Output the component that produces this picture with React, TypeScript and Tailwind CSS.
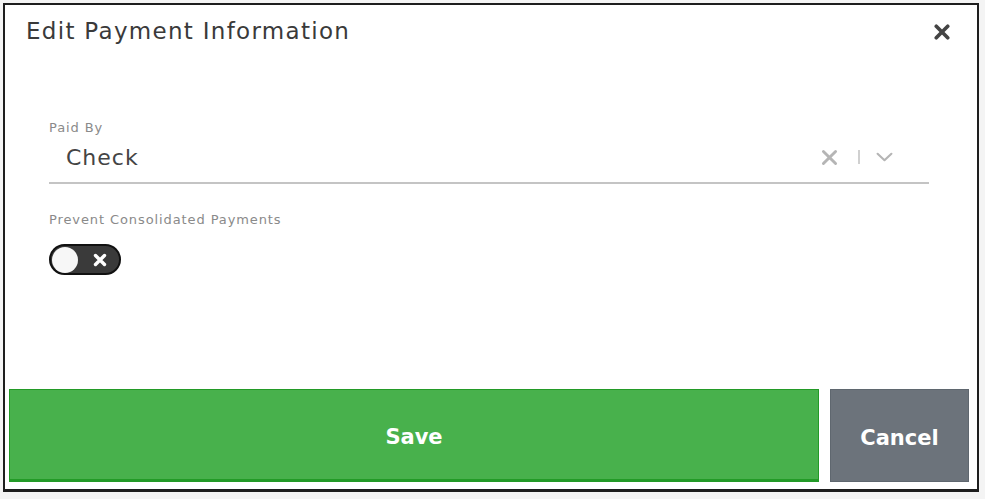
const font = { fontFamily: '"DejaVu Sans", Verdana, sans-serif' };

function Cross({ size, stroke, color }: { size: number; stroke: number; color: string }) {
  return (
    <svg viewBox="0 0 14 14" width={size} height={size}>
      <path d="M2 2 L12 12 M12 2 L2 12" stroke={color} strokeWidth={stroke} strokeLinecap="round" />
    </svg>
  );
}

function Toggle() {
  return (
    <div className="flex h-[31px] w-[72px] items-center rounded-full border-2 border-[#111] bg-[#3a3a3a] px-[1px]">
      <span className="h-[26px] w-[26px] rounded-full bg-[#f7f7f7]" />
      <span className="ml-[13px] flex h-[18px] w-[18px] items-center justify-center">
        <svg viewBox="0 0 16 16" className="h-[16px] w-[16px]">
          <path d="M3.5 3.5 L12.5 12.5 M12.5 3.5 L3.5 12.5" stroke="#fff" strokeWidth="3.4" strokeLinecap="round" />
        </svg>
      </span>
    </div>
  );
}

export default function App() {
  return (
    <div className="h-[499px] w-[985px] bg-[#f4f4f4] p-[3px]" style={font}>
      <div className="flex h-[489px] w-[976px] flex-col border-2 border-b-[3px] border-[#1e1e1e] bg-white">
        <div className="flex items-start justify-between pl-[21px] pr-[27px] pt-[11px]">
          <h1 className="text-[23px] leading-[30px] tracking-[1.3px] text-[#3a3a3a]">Edit Payment Information</h1>
          <button className="mt-[8px]" aria-label="Close">
            <Cross size={16} stroke={3.2} color="#444" />
          </button>
        </div>

        <div className="flex flex-1 flex-col pl-[44px] pr-[48px] pt-[74px]">
          <label className="text-[13px] leading-[16px] tracking-[0.9px] text-[#8a8a8a]">Paid By</label>
          <div className="flex h-[48px] items-center border-b-2 border-[#c4c4c4] pb-[4px]">
            <span className="flex-1 pl-[17px] text-[22px] tracking-[1px] text-[#444]">Check</span>
            <Cross size={17} stroke={2.4} color="#b5b5b5" />
            <span className="ml-[20px] mr-[16px] h-[14px] w-[2px] bg-[#d0d0d0]" />
            <svg viewBox="0 0 16 9" width={17} height={10} className="mr-[36px]">
              <path d="M1.5 1.5 L8 7.5 L14.5 1.5" fill="none" stroke="#b5b5b5" strokeWidth="2" strokeLinecap="round" strokeLinejoin="round" />
            </svg>
          </div>

          <label className="mt-[28px] text-[13px] leading-[16px] tracking-[0.9px] text-[#8a8a8a]">Prevent Consolidated Payments</label>
          <div className="mt-[16px]">
            <Toggle />
          </div>
        </div>

        <div className="flex gap-[11px] pb-[7px] pl-[4px] pr-[8px]">
          <button className="flex h-[93px] flex-1 items-center justify-center border border-[#239a27] border-b-[3px] bg-[#48b14c] pt-[6px] text-[21px] font-bold text-white">
            Save
          </button>
          <button className="flex h-[93px] w-[139px] items-center justify-center border border-[#5f676f] bg-[#6c737b] pt-[6px] text-[21px] font-bold text-white">
            Cancel
          </button>
        </div>
      </div>
    </div>
  );
}
